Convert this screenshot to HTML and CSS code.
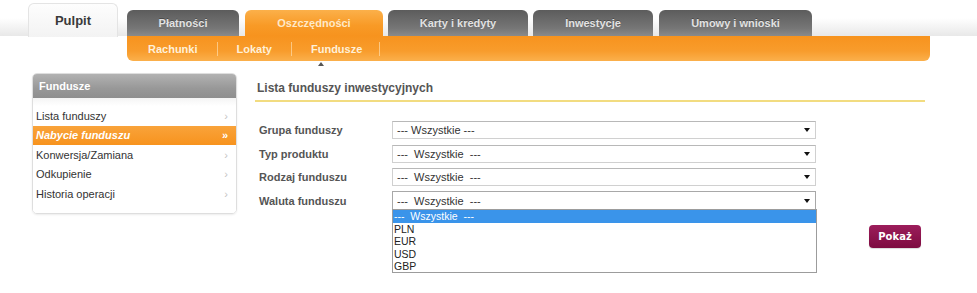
FILE: index.html
```html
<!DOCTYPE html>
<html lang="pl">
<head>
<meta charset="utf-8">
<title>Fundusze</title>
<link rel="stylesheet" href="styles.css">
</head>
<body>
<header class="top">
  <nav class="tabs">
    <div class="tab tab-home">Pulpit</div>
    <div class="tab tab-dark t-plat">Płatności</div>
    <div class="tab tab-orange t-osz">Oszczędności</div>
    <div class="tab tab-dark t-karty">Karty i kredyty</div>
    <div class="tab tab-dark t-inw">Inwestycje</div>
    <div class="tab tab-dark t-umowy">Umowy i wnioski</div>
  </nav>
</header>
<div class="subnav">
  <span class="sub sub-first">Rachunki</span>
  <span class="sub">Lokaty</span>
  <span class="sub sub-active">Fundusze<i class="pointer"></i></span>
</div>
<div class="page">
  <aside class="side">
    <div class="side-head">Fundusze</div>
    <ul class="side-list">
      <li class="side-item">Lista funduszy<span class="chev">›</span></li>
      <li class="side-item side-active">Nabycie funduszu<span class="chev">»</span></li>
      <li class="side-item">Konwersja/Zamiana<span class="chev">›</span></li>
      <li class="side-item">Odkupienie<span class="chev">›</span></li>
      <li class="side-item">Historia operacji<span class="chev">›</span></li>
    </ul>
  </aside>
  <main class="main">
    <h1 class="title">Lista funduszy inwestycyjnych</h1>
    <div class="form">
      <div class="row">
        <span class="label">Grupa funduszy</span>
        <div class="select"><span>--- Wszystkie ---</span><i class="caret"></i></div>
      </div>
      <div class="row">
        <span class="label">Typ produktu</span>
        <div class="select"><span>---&nbsp; Wszystkie &nbsp;---</span><i class="caret"></i></div>
      </div>
      <div class="row">
        <span class="label">Rodzaj funduszu</span>
        <div class="select"><span>---&nbsp; Wszystkie &nbsp;---</span><i class="caret"></i></div>
      </div>
      <div class="row">
        <span class="label">Waluta funduszu</span>
        <div class="select select-open"><span>---&nbsp; Wszystkie &nbsp;---</span><i class="caret"></i>
          <ul class="options">
            <li class="opt opt-sel">---&nbsp; Wszystkie &nbsp;---</li>
            <li class="opt">PLN</li>
            <li class="opt">EUR</li>
            <li class="opt">USD</li>
            <li class="opt">GBP</li>
          </ul>
        </div>
      </div>
    </div>
    <div class="actions">
      <button class="btn">Pokaż</button>
    </div>
  </main>
</div>
</body>
</html>
```
FILE: styles.css
```css
* { box-sizing: border-box; }
html, body { margin: 0; padding: 0; background: #fff; }
body { font-family: "Liberation Sans", Arial, sans-serif; font-size: 11px; color: #333; width: 977px; height: 293px; overflow: hidden; }

.top {
  height: 36px;
  background: linear-gradient(to bottom, #fff 0, #fff 50%, #e8e8e8 100%);
}
.tabs { display: flex; align-items: flex-end; height: 36px; padding-left: 28px; }
.tab {
  display: flex; align-items: center; justify-content: center;
  font-weight: bold; font-size: 11px;
  border-radius: 6px 6px 0 0;
  height: 26px;
}
.tab-home {
  width: 90px; height: 34px; font-size: 13px; color: #3a3a3a;
  background: linear-gradient(to bottom, #fdfdfd, #f3f3f3);
  border: 1px solid #e4e4e4; border-bottom: none;
  margin-right: 9px; margin-bottom: -1px; padding-bottom: 0;
}
.tab-dark {
  color: #e2e2e2;
  background: linear-gradient(to bottom, #5c5c5c, #767676 70%, #8a8a8a);
  text-shadow: 0 -1px 0 rgba(0,0,0,.3);
}
.tab-orange {
  color: #ffe9c8;
  background: linear-gradient(to bottom, #fbb04a, #f89a26 60%, #f7931e);
}
.t-plat { width: 112px; margin-right: 6px; }
.t-osz { width: 138px; margin-right: 5px; }
.t-karty { width: 140px; margin-right: 5px; }
.t-inw { width: 120px; margin-right: 6px; }
.t-umowy { width: 153px; }

.subnav {
  margin-left: 127px; width: 803px; height: 25px;
  background: linear-gradient(to bottom, #f7931e, #f89c2c 60%, #fbb04c);
  border-radius: 0 0 6px 6px;
  display: flex; align-items: center;
}
.sub {
  position: relative;
  font-weight: bold; font-size: 11px; color: #fff0d8;
  padding: 0 19px; line-height: 14px;
  border-right: 1px solid rgba(255,230,190,.6);
}
.sub-first { padding-left: 21px; }
.sub-active { padding-right: 17px; }
.pointer {
  position: absolute; left: 26px; top: 20px;
  width: 0; height: 0;
  border-left: 3px solid transparent; border-right: 3px solid transparent;
  border-bottom: 4px solid #555;
}

.page { display: flex; align-items: flex-start; margin-top: 12px; padding-left: 32px; }

.side {
  width: 205px;
  border: 1px solid #dedede; border-radius: 5px;
  box-shadow: 0 1px 2px rgba(0,0,0,.08);
  overflow: hidden;
}
.side-head {
  height: 24px; line-height: 24px; padding-left: 6px;
  background: linear-gradient(to bottom, #b2b2b2, #989898 60%, #8e8e8e);
  color: #fff; font-weight: bold; font-size: 11px;
}
.side-list {
  list-style: none; margin: 0; padding: 8px 0 9px;
  background: linear-gradient(to bottom, #f4f4f4 0, #fff 8px);
}
.side-item {
  display: flex; align-items: center; justify-content: space-between;
  height: 19.5px; padding: 0 8px 0 3px;
  font-size: 11px; color: #333;
}
.chev { color: #c4c4c4; font-size: 11px; }
.side-active {
  background: linear-gradient(to bottom, #f9a33a, #f7931e);
  color: #fff; font-weight: bold; font-style: italic;
}
.side-active .chev { color: #fff; font-style: normal; font-weight: bold; }

.main { width: 670px; margin-left: 18px; }
.title {
  margin: 0; padding: 7px 0 4px 2px;
  font-size: 12px; line-height: 16px; font-weight: bold; color: #555;
  border-bottom: 2px solid #f2dc80;
}
.form { display: flex; flex-direction: column; gap: 5.5px; margin-top: 19px; }
.row { display: flex; align-items: center; height: 18px; }
.label { width: 137px; padding-left: 4px; font-weight: bold; font-size: 11px; color: #555; }
.select {
  position: relative;
  width: 424px; height: 18px;
  display: flex; align-items: center; justify-content: space-between;
  border: 1px solid #d0d0d0; border-top-color: #b8b8b8;
  background: #fff;
  padding: 0 5px 0 4px;
  font-size: 11px; color: #333;
}
.select-open { border-color: #a8a8a8; height: 19px; }
.caret {
  width: 0; height: 0;
  border-left: 3.5px solid transparent; border-right: 3.5px solid transparent;
  border-top: 4px solid #111;
}
.options {
  position: absolute; left: -1px; top: 100%;
  width: 425px; margin: 0; padding: 0; list-style: none;
  border: 1px solid #9c9c9c; background: #fff;
}
.opt { height: 12.3px; line-height: 12.3px; padding-left: 1px; font-size: 10.5px; color: #222; }
.opt-sel { background: #3a94ea; color: #fff; height: 13px; }

.actions { display: flex; justify-content: flex-end; margin-top: 15px; padding-right: 4px; }
.btn {
  width: 52px; height: 23px;
  border: none; border-radius: 4px;
  background: linear-gradient(to bottom, #9c1d5b, #7d0b40);
  color: #fff; font-family: "DejaVu Sans", Verdana, sans-serif; font-weight: bold; font-size: 10px;
  box-shadow: 0 1px 1px rgba(0,0,0,.15);
}
```
